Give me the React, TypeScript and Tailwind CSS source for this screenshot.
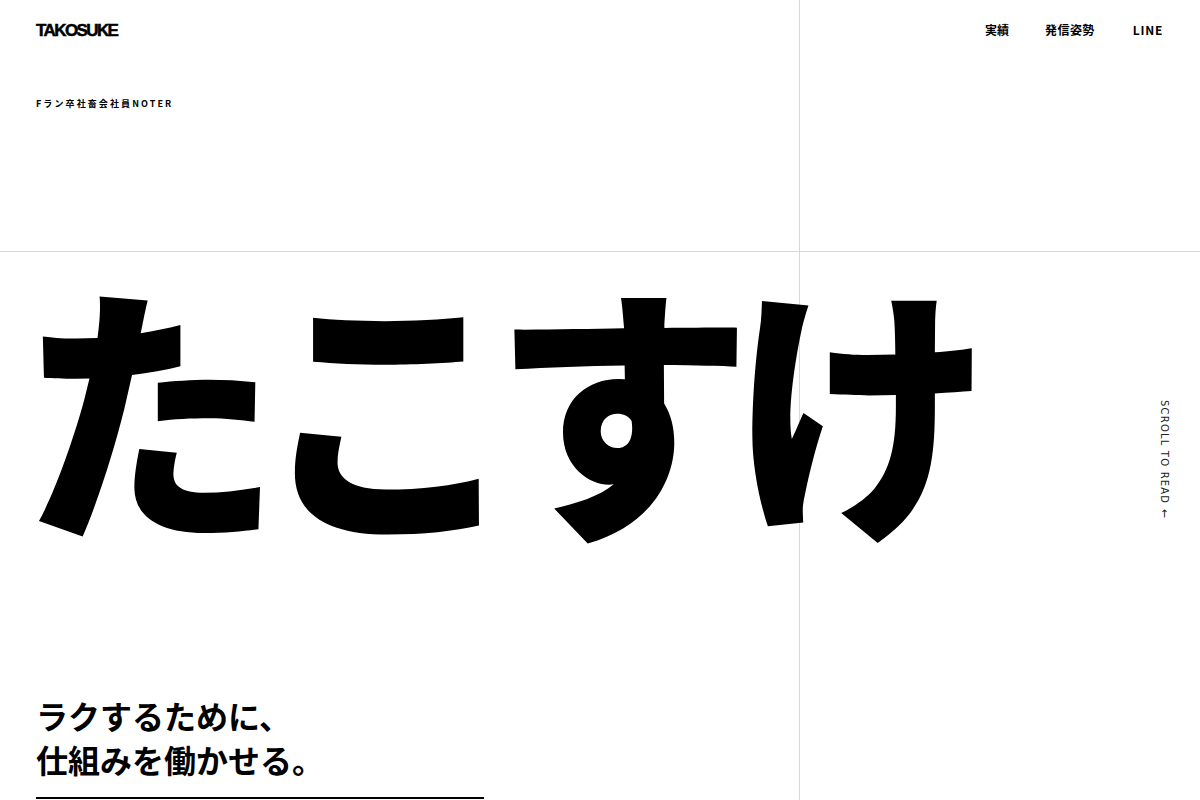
export default function App() {
  return (
    <div
      className="grid h-[800px] w-[1200px] grid-cols-[800px_400px] grid-rows-[252px_548px] overflow-hidden bg-white text-black"
      style={{ fontFamily: '"Noto Sans CJK JP", "Noto Sans", sans-serif' }}
    >
      {/* top left */}
      <div className="flex flex-col border-r border-b border-[#d8d8d8] pl-[36px] pt-[21px]">
        <div
          className="text-[17px] font-bold leading-[19px] tracking-[-1.6px] [-webkit-text-stroke:0.5px_black]"
          style={{ fontFamily: '"Liberation Sans", Arial, sans-serif' }}
        >
          TAKOSUKE
        </div>
        <div className="mt-[58px] text-[9px] font-bold leading-[12px] tracking-[2.1px]">
          Fラン卒社畜会社員NOTER
        </div>
      </div>

      {/* top right */}
      <div className="flex items-start justify-end border-b border-[#d8d8d8] pr-[37px] pt-[22px]">
        <nav className="flex gap-[38px] text-[12px] font-bold leading-[16px]">
          <a href="#" className="-mr-[2px]">実績</a>
          <a href="#" className="tracking-[0.04em]">発信姿勢</a>
          <a href="#" className="tracking-[0.06em]">LINE</a>
        </nav>
      </div>

      {/* bottom left */}
      <div className="relative flex flex-col justify-between border-r border-[#d8d8d8] pl-[36px] pb-[1px]">
        <h1 className="relative z-10 -ml-[16px] mt-[13px] origin-top scale-y-[1.05] whitespace-nowrap text-[260px] font-black leading-none tracking-[-21px]">
          たこすけ
        </h1>
        <div>
          <p className="text-[32px] font-bold leading-[44px]">
            ラクするために、
            <br />
            仕組みを働かせる。
          </p>
          <div className="mt-[16px] h-[2px] w-[448px] bg-black" />
        </div>
      </div>

      {/* bottom right */}
      <div className="flex items-start justify-end pr-[31px] pt-[148px]">
        <span
          className="text-[10px] leading-[10px] tracking-[0.12em] text-[#222]"
          style={{ writingMode: "vertical-rl", fontFamily: '"DejaVu Sans", "Liberation Sans", sans-serif' }}
        >
          SCROLL TO READ <span className="text-[11px]">←</span>
        </span>
      </div>
    </div>
  );
}
